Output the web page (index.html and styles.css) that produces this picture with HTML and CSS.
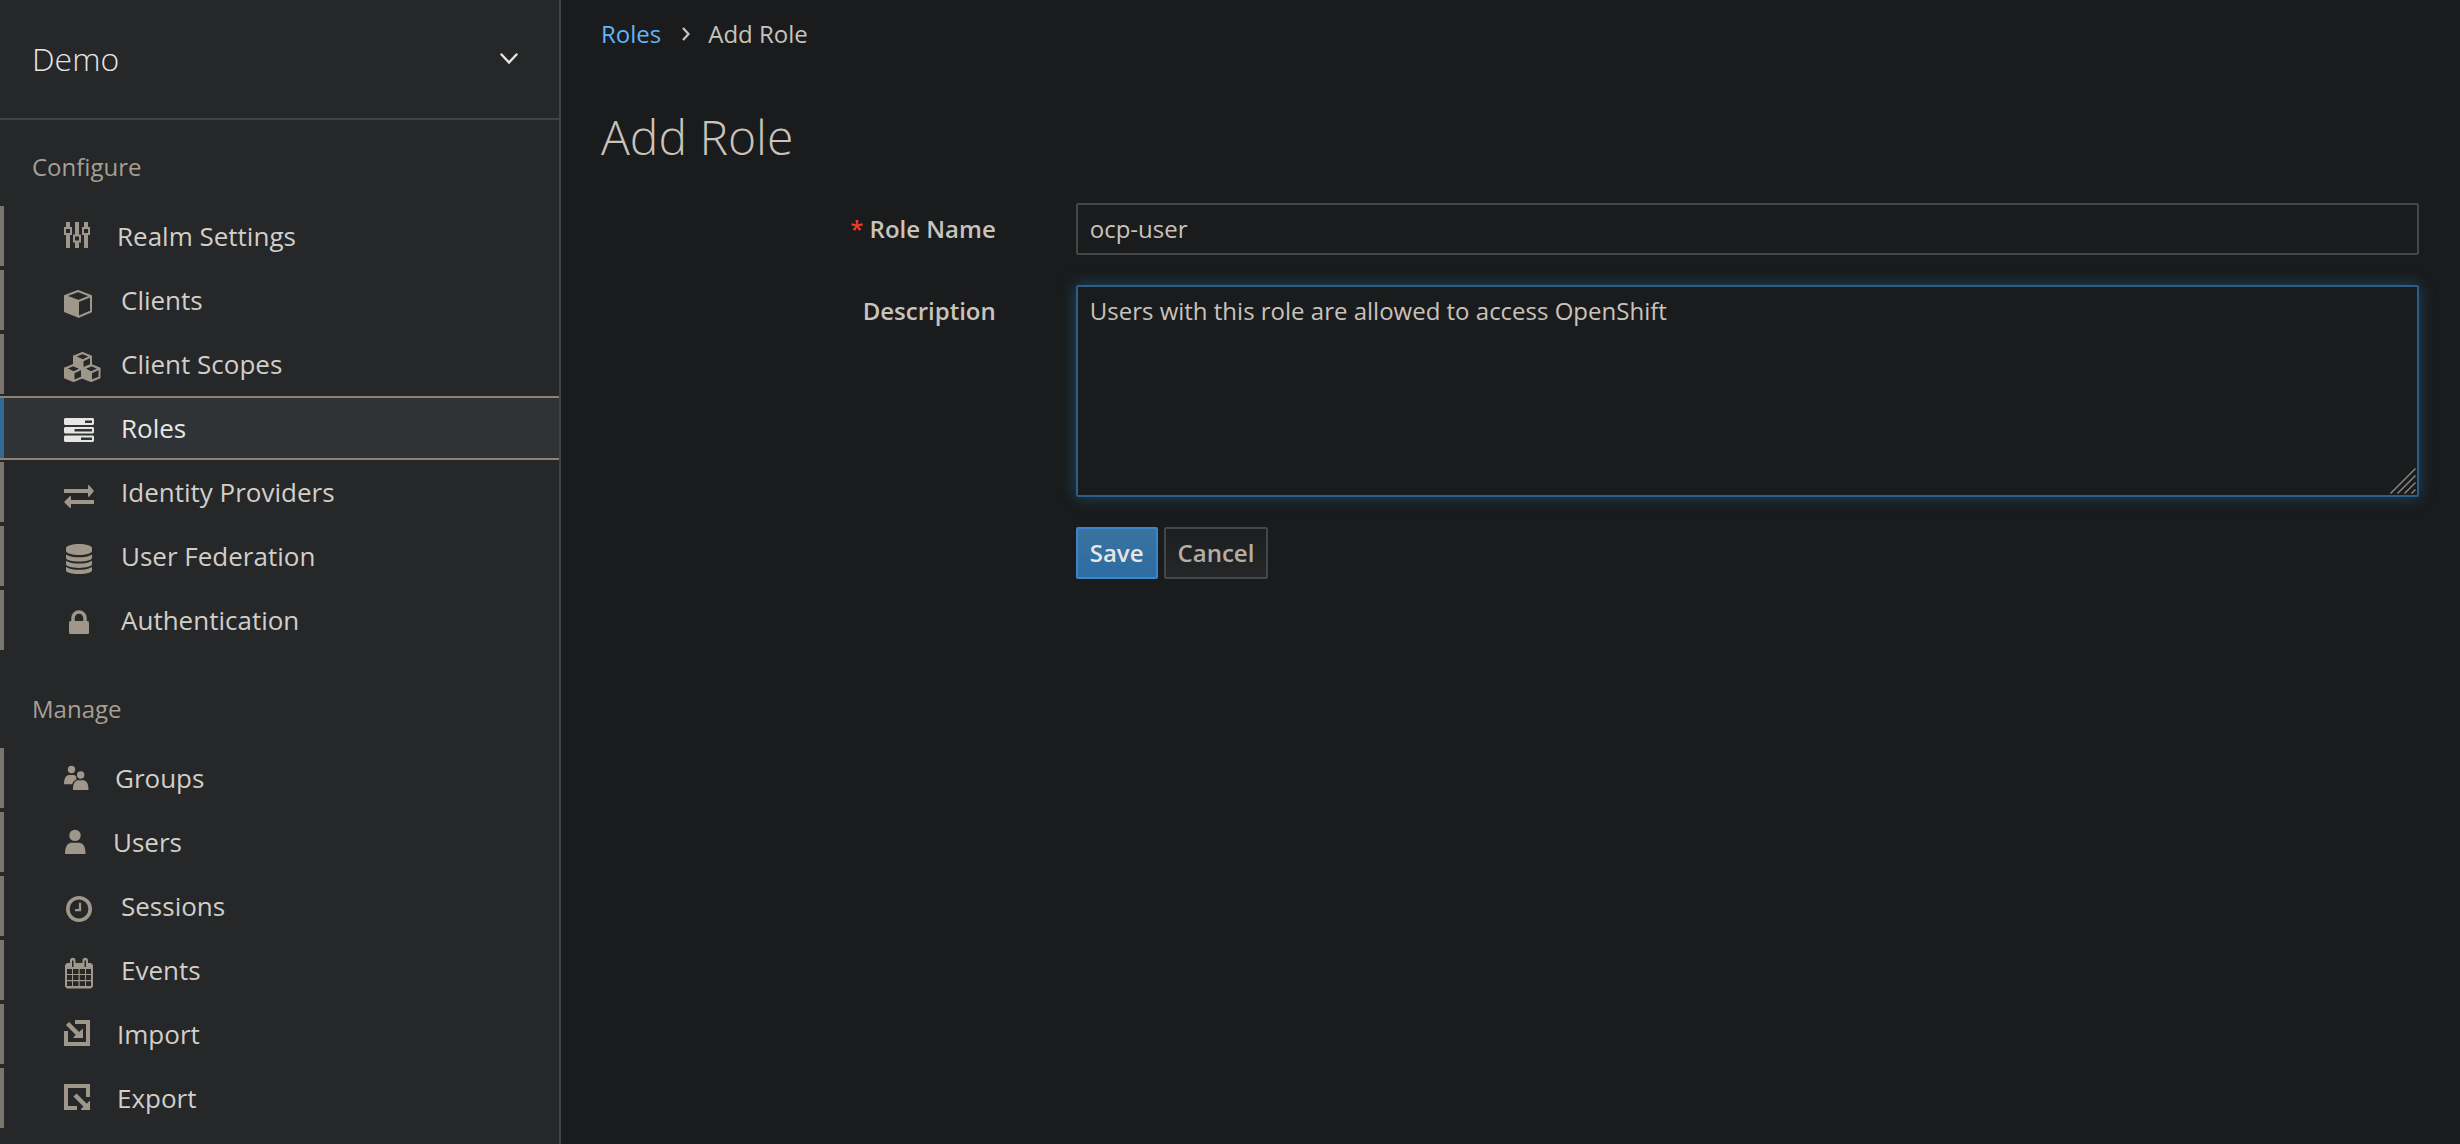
FILE: index.html
```html
<!DOCTYPE html>
<html lang="en">
<head>
<meta charset="utf-8">
<meta name="viewport" content="width=device-width, initial-scale=1">
<title>Add Role</title>
<link rel="stylesheet" href="styles.css">
</head>
<body>
<div class="layout">
  <aside class="sidebar">
    <button class="realm" type="button">
      <span>Demo</span>
      <svg width="18" height="12" viewBox="0 0 18 12" aria-hidden="true"><path d="M1.500 1.500 9 9.500l7.500-8" fill="none" stroke="currentColor" stroke-width="2.400" stroke-linecap="round"/></svg>
    </button>
    <nav class="nav">
      <h2 class="nav-title">Configure</h2>
      <ul class="nav-list">
        <li><a class="nav-link" href="#realm"><svg class="icon icon-26" viewBox="0 0 26 36" aria-hidden="true"><path fill="currentColor" d="M2 4h4v5H2zM2 17h4v13H2zM11 4h4v13h-4zM11 24h4v6h-4zM20 4h4v5h-4zM20 17h4v13h-4z"/><path fill="none" stroke="currentColor" stroke-width="2" d="M1 10h6v6H1zM10 17.500h6v6h-6zM19 10h6v6h-6z"/></svg>Realm Settings</a></li>
        <li><a class="nav-link" href="#clients"><svg class="icon" viewBox="0 0 30 36" aria-hidden="true"><path fill="currentColor" d="M0 13.500 15 19v17L0 30z"/><path fill="none" stroke="currentColor" stroke-width="2" stroke-linejoin="round" d="M1 14 14 9l13 5-12.500 5zM27 14v15.500L14 35"/></svg>Clients</a></li>
        <li><a class="nav-link" href="#scopes"><svg class="icon" viewBox="0 0 30 36" aria-hidden="true"><g fill="none" stroke="currentColor" stroke-width="2" stroke-linejoin="round"><g id="cube"><path d="M10 10.500 18.500 7l8.500 3.500-8.500 4z"/><path fill="currentColor" d="M10 10.500l8.500 4V23L10 19.500z"/><path d="M18.500 23 27 19.500v-9"/></g><use href="#cube" x="-9" y="12"/><use href="#cube" x="8.500" y="12"/></g></svg>Client Scopes</a></li>
        <li><a class="nav-link active" href="#roles" aria-current="page"><svg class="icon" viewBox="0 0 30 36" aria-hidden="true"><path fill="currentColor" fill-rule="evenodd" d="M1 8h28l1 1v5l-1 1H1l-1-1V9zM21 10.500V13h7v-2.500zM1 17h28l1 1v4.500l-1 1H1l-1-1V18zM10.500 19v2.500H28V19zM1 25.500h28l1 1V31l-1 1H1l-1-1v-4.500zM17 27.500V30h11v-2.500z"/></svg>Roles</a></li>
        <li><a class="nav-link" href="#idp"><svg class="icon" viewBox="0 0 30 36" aria-hidden="true"><path fill="currentColor" d="M0 15h24v-3.500l1-.5 5 6-5 6-1-.5V19H0zM30 26H7v-3.500L6 22l-6 6 6 6 1-.5V30h23z"/></svg>Identity Providers</a></li>
        <li><a class="nav-link" href="#federation"><svg class="icon" viewBox="0 0 30 36" aria-hidden="true"><g fill="currentColor"><path d="M2 11v-1c0-2 6-4 13-4s13 2 13 4v3c0 2-6 4-13 4S2 15 2 13z"/><path id="disk" d="M2 16.500c3 2 8 2.800 13 2.800s10-.8 13-2.800V20c0 2-6 3.600-13 3.600S2 22 2 20z"/><use href="#disk" y="6.300"/><use href="#disk" y="12.500"/></g></svg>User Federation</a></li>
        <li><a class="nav-link" href="#auth"><svg class="icon" viewBox="0 0 30 36" aria-hidden="true"><rect x="5" y="19" width="20" height="13" rx="1.500" fill="currentColor"/><path d="M9 20v-4a6 6 0 0 1 12 0v4" fill="none" stroke="currentColor" stroke-width="3.500"/></svg>Authentication</a></li>
      </ul>
      <h2 class="nav-title">Manage</h2>
      <ul class="nav-list">
        <li><a class="nav-link" href="#groups"><svg class="icon icon-24" viewBox="0 0 24 36" aria-hidden="true"><g fill="currentColor"><circle cx="7.500" cy="9.500" r="3.700"/><circle cx="16.700" cy="15" r="3.700"/><path d="M0 24.300c0-6 2-9 5-9.300h4c1.500 0 2.600.6 3.300 1.500-.4 2 .2 3 .2 3-2.500 1-3.800 2.800-4.200 4.800zM9 30c0-6 1.700-9.300 5-9.700h5.500c3.300.4 5 3.700 5 9.700z"/></g></svg>Groups</a></li>
        <li><a class="nav-link" href="#users"><svg class="icon icon-22" viewBox="0 0 22 36" aria-hidden="true"><g fill="currentColor"><circle cx="11" cy="11.400" r="5.700"/><path d="M1 30c0-7 2-10.500 6-11.300h8.500c4 .8 6 4.300 6 11.300z"/></g></svg>Users</a></li>
        <li><a class="nav-link" href="#sessions"><svg class="icon" viewBox="0 0 30 36" aria-hidden="true"><circle cx="15" cy="21" r="11.200" fill="none" stroke="currentColor" stroke-width="3.600"/><path d="M16 14.700v7.500h-5" fill="none" stroke="currentColor" stroke-width="2.200"/></svg>Sessions</a></li>
        <li><a class="nav-link" href="#events"><svg class="icon" viewBox="0 0 30 36" aria-hidden="true"><path fill="currentColor" fill-rule="evenodd" d="M3 11h3V8.500a2.500 2.500 0 0 1 5.500 0V11h7V8.500a2.500 2.500 0 0 1 5.500 0V11h3l2 2v21.500l-2 2H3l-2-2V13zM8 8.500V15h1.500V8.500zM20.500 8.500V15H22V8.500zM3 17v5h5v-5zM9 17v5h5.500v-5zM15.700 17v5H21v-5zM22 17v5h5v-5zM3 23v5h5v-5zM9 23v5h5.500v-5zM15.700 23v5H21v-5zM22 23v5h5v-5zM3 29.200V34h5v-4.800zM9 29.200V34h5.500v-4.800zM15.700 29.200V34H21v-4.800zM22 29.200V34h5v-4.800z"/></svg>Events</a></li>
        <li><a class="nav-link" href="#import"><svg class="icon icon-26" viewBox="0 0 26 36" aria-hidden="true"><path d="M11 6h13v22H2V15" fill="none" stroke="currentColor" stroke-width="4"/><path d="M3.500 7.500 15 19" stroke="currentColor" stroke-width="4.500"/><path d="M19 12.500V22H9.500v-1z" fill="currentColor"/></svg>Import</a></li>
        <li><a class="nav-link" href="#export"><svg class="icon icon-26" viewBox="0 0 26 36" aria-hidden="true"><path d="M24 17V6H2v22h11" fill="none" stroke="currentColor" stroke-width="4"/><path d="M11 15 23 27" stroke="currentColor" stroke-width="4.500"/><path d="M26 20.500V30h-9v-1z" fill="currentColor"/></svg>Export</a></li>
      </ul>
    </nav>
  </aside>
  <main class="main">
    <nav aria-label="Breadcrumb">
      <ol class="breadcrumb">
        <li><a href="#roles">Roles</a></li>
        <li class="current"><svg width="8" height="14" viewBox="0 0 8 14" aria-hidden="true"><path d="m1 1 5.500 6L1 13" fill="none" stroke="currentColor" stroke-width="2.200"/></svg>Add Role</li>
      </ol>
    </nav>
    <h1 class="title">Add Role</h1>
    <form class="form">
      <label class="label" for="name"><span class="required">*</span> Role Name</label>
      <div class="field"><input class="control" id="name" type="text" value="ocp-user"></div>
      <label class="label" for="description">Description</label>
      <div class="field">
        <textarea class="control area" id="description">Users with this role are allowed to access OpenShift</textarea>
        <svg class="grip" width="26" height="26" viewBox="0 0 26 26" aria-hidden="true"><path d="M.5 25.500l25-25M7.500 25.500l18-18M14.500 25.500l11-11M21.500 25.500l4-4" stroke="currentColor" stroke-width="1.400"/></svg>
      </div>
      <div class="actions">
        <button class="btn primary" type="submit">Save</button>
        <button class="btn" type="button">Cancel</button>
      </div>
    </form>
  </main>
</div>
</body>
</html>
```
FILE: styles.css
```css
* {
  box-sizing: border-box;
}

body {
  margin: 0;
  background: #1a1b1c;
  color: #c8c3bc;
  font: 24px/36px "Open Sans", "Noto Sans", sans-serif;
}

ul,
ol {
  margin: 0;
  padding: 0;
  list-style: none;
}

.layout {
  display: grid;
  grid-template-columns: 561px minmax(0, 1fr);
  min-height: 100vh;
}

.sidebar {
  border-right: 2px solid #404244;
  background: #252729;
}

.realm {
  display: flex;
  align-items: center;
  justify-content: space-between;
  width: 100%;
  height: 120px;
  padding: 0 41px 0 32px;
  border: 0;
  border-bottom: 2px solid #404244;
  background: none;
  color: #e8e6e3;
  font: 300 32px/44px "Open Sans", "Noto Sans", sans-serif;
}

.nav {
  padding-top: 29px;
}

.nav-title {
  margin: 0 0 19px;
  padding-left: 32px;
  color: #a79f94;
  font-size: 24px;
  font-weight: 400;
}

.nav-list + .nav-title {
  margin-top: 39px;
}

.nav-link {
  position: relative;
  display: flex;
  align-items: center;
  gap: 27px;
  height: 64px;
  padding-left: 64px;
  border: solid transparent;
  border-width: 2px 0;
  color: #d2cec8;
  font-size: 26px;
  text-decoration: none;
}

.nav-link::before {
  content: "";
  position: absolute;
  top: 0;
  bottom: 0;
  left: 0;
  width: 4px;
  background: #7b766b;
}

.nav-link.active {
  border-color: #8c8273;
  background: #2f3336;
  color: #e8e6e3;
}

.nav-link.active::before {
  background: #336a94;
}

.icon {
  flex: none;
  width: 30px;
  height: 36px;
  overflow: visible;
  color: #9f978a;
}

.icon-26 {
  width: 26px;
}

.icon-24 {
  width: 24px;
}

.icon-22 {
  width: 22px;
}

.active .icon {
  color: #e8e6e3;
}

.main {
  padding-top: 16px;
}

.breadcrumb {
  display: flex;
  gap: 21px;
  padding: 0 40px;
}

.breadcrumb a {
  color: #62b5f5;
  text-decoration: none;
}

.current {
  display: flex;
  align-items: center;
  gap: 18px;
}

.title {
  margin: 57px 0 38px;
  padding: 0 40px;
  font-size: 48px;
  font-weight: 300;
  line-height: 56px;
}

.form {
  display: grid;
  grid-template-columns: minmax(0, 3fr) minmax(0, 9fr);
  row-gap: 30px;
}

.label {
  padding: 8px 40px;
  font-weight: 600;
  text-align: right;
}

.required {
  color: #ee3b2c;
}

.field {
  position: relative;
  display: flex;
  padding: 0 41px 0 40px;
}

.control {
  width: 100%;
  height: 52px;
  padding: 6px 12px;
  border: 2px solid #434847;
  border-radius: 2px;
  outline: 0;
  background: #1a1b1c;
  color: #c8c3bc;
  font: inherit;
}

input.control {
  padding: 5px 12px 7px;
}

.area {
  height: 212px;
  resize: none;
  border-color: #2b5f8a;
  box-shadow: 0 0 16px rgba(28, 105, 148, 0.6);
}

.grip {
  position: absolute;
  right: 44px;
  bottom: 3px;
  color: #8a8a8a;
  pointer-events: none;
}

.actions {
  grid-column: 2;
  display: flex;
  gap: 6px;
  padding: 0 40px;
}

.btn {
  height: 52px;
  padding: 0 12px;
  border: 2px solid #434847;
  border-radius: 2px;
  background: linear-gradient(#1c1d1e, #252729);
  color: #b5aea5;
  font: 600 24px/36px "Open Sans", "Noto Sans", sans-serif;
}

.btn.primary {
  border-color: #3b85cb;
  background: linear-gradient(#3a739f, #2d6ca2);
  color: #e8e6e3;
}
```
